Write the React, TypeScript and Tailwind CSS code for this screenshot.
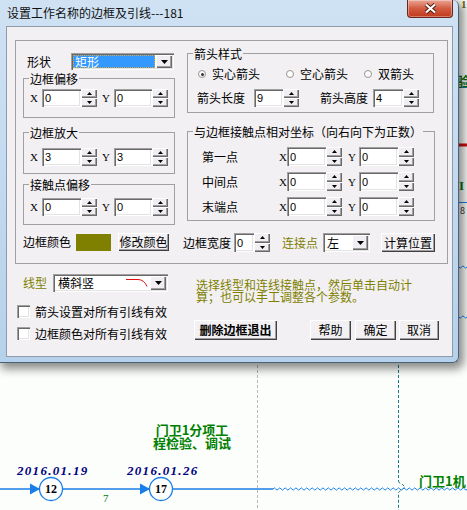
import React from "react";

const cjk = "font-['Noto_Sans_CJK_SC',sans-serif]";
const sans = "font-['Liberation_Sans',sans-serif]";
const serif = "font-['Liberation_Serif',serif]";

const sunken =
  "bg-white shadow-[inset_1px_1px_0_#a0a0a0,inset_2px_2px_0_#696969,inset_-1px_-1px_0_#ffffff,inset_-2px_-2px_0_#e3e3e3]";
const raised =
  "bg-[#f0eef2] shadow-[inset_1px_1px_0_#ffffff,inset_-1px_-1px_0_#696969,inset_-2px_-2px_0_#a0a0a0]";
const btnFace =
  "bg-[#f2f0f3] shadow-[inset_1px_1px_0_#ffffff,inset_-1px_-1px_0_#404040,inset_-2px_-2px_0_#a0a0a0] flex items-center justify-center";

function Tri({ up }: { up?: boolean }) {
  return (
    <svg width="5" height="3" viewBox="0 0 5 3">
      <path d={up ? "M2.5 0L5 3H0Z" : "M0 0H5L2.5 3Z"} fill="#000" />
    </svg>
  );
}

function Spin() {
  return (
    <div className="w-[16px] h-full flex flex-col shrink-0">
      <div className={`flex-1 flex items-center justify-center ${raised}`}>
        <Tri up />
      </div>
      <div className={`flex-1 flex items-center justify-center ${raised}`}>
        <Tri />
      </div>
    </div>
  );
}

function Edit({ v, w }: { v: string; w: string }) {
  return (
    <div className={`${w} h-full shrink-0 ${sunken} pl-[3px] flex items-center ${sans} text-[11px]`}>
      {v}
    </div>
  );
}

function Combo({ w, children }: { w: string; children: React.ReactNode }) {
  return (
    <div className={`${w} h-full shrink-0 ${sunken} p-[2px] flex`}>
      <div className="flex-1 flex items-center min-w-0">{children}</div>
      <div className={`w-[16px] h-full shrink-0 flex items-center justify-center ${raised}`}>
        <svg width="7" height="4" viewBox="0 0 7 4">
          <path d="M0 0H7L3.5 4Z" fill="#000" />
        </svg>
      </div>
    </div>
  );
}

function Btn({ w, bold, children }: { w: string; bold?: boolean; children: React.ReactNode }) {
  return <div className={`${w} h-full shrink-0 ${btnFace} ${bold ? "font-bold" : ""}`}>{children}</div>;
}

function Group({ label, cls, children }: { label: string; cls: string; children: React.ReactNode }) {
  return (
    <fieldset className={`${cls} shrink-0 border border-[#a0a0a0]`}>
      <legend className="ml-[5px] px-[1px] leading-[12px] relative top-[1px]">{label}</legend>
      {children}
    </fieldset>
  );
}

function LeftXY({ v, mt }: { v: string; mt: string }) {
  return (
    <div className={`${mt} h-[18px] flex items-center pl-[6px]`}>
      <span className={`w-[12px] ${serif} text-[11px]`}>X</span>
      <Edit v={v} w="w-[39px]" />
      <Spin />
      <span className={`w-[17px] pl-[5px] ${serif} text-[11px]`}>Y</span>
      <Edit v={v} w="w-[38px]" />
      <Spin />
    </div>
  );
}

function PtRow({ label, mt }: { label: string; mt: string }) {
  return (
    <div className={`${mt} h-[19px] flex items-center pl-[14px]`}>
      <span className="w-[77px]">{label}</span>
      <span className={`w-[8px] ${serif} text-[11px]`}>X</span>
      <Edit v="0" w="w-[39px]" />
      <Spin />
      <span className={`w-[17px] pl-[6px] ${serif} text-[11px]`}>Y</span>
      <Edit v="0" w="w-[39px]" />
      <Spin />
    </div>
  );
}

function Radio({ label, w, checked }: { label: string; w: string; checked?: boolean }) {
  return (
    <div className={`${w} flex items-center`}>
      <span className="w-[8px] h-[8px] rounded-full border border-[#9a9290] bg-white flex items-center justify-center">
        {checked && <span className="w-[3px] h-[3px] rounded-full bg-[#333]" />}
      </span>
      <span className="ml-[6px]">{label}</span>
    </div>
  );
}

function Check({ label, mt }: { label: string; mt: string }) {
  return (
    <div className={`${mt} h-[13px] flex items-center`}>
      <span className={`w-[13px] h-[13px] ${sunken}`} />
      <span className="ml-[5px] whitespace-nowrap">{label}</span>
    </div>
  );
}

function wave(x0: number, x1: number, y: number, p = 5.4, a = 1.1) {
  let d = `M${x0} ${y}`;
  for (let x = x0; x < x1; x += p) d += ` q${p / 4} ${-2 * a} ${p / 2} 0 t${p / 2} 0`;
  return d;
}

function Diagram() {
  const blue = "#1a7ee8";
  const teal = "#1c7a86";
  return (
    <>
      <svg className="absolute inset-0" width="467" height="510" viewBox="0 0 467 510">
        {/* strip right of the dialog */}
        <line x1="440" y1="87.5" x2="467" y2="87.5" stroke={blue} />
        <line x1="440" y1="145" x2="467" y2="145" stroke="#cc1111" strokeWidth="3" />
        <line x1="440" y1="202.5" x2="467" y2="202.5" stroke={blue} />
        <path d={wave(440, 467, 267)} stroke={blue} fill="none" />
        <path d={wave(440, 467, 317)} stroke={blue} fill="none" />

        {/* lower part of the network chart */}
        <line x1="257.5" y1="360" x2="257.5" y2="510" stroke="#b8b8b8" strokeDasharray="3 2" />
        <path d="M398.5 360V481" stroke={teal} strokeDasharray="3 2" fill="none" />
        <path d="M398.5 481q0 2 3 2.5l3.5 3.5-3.5 3.5q-3 0.5-3 3V510" stroke={teal} strokeDasharray="3 2" fill="none" />
        <line x1="0" y1="489" x2="273" y2="489" stroke={blue} strokeWidth="1.5" />
        <path d={wave(273, 470, 489)} stroke={blue} fill="none" />

        <path d="M30 483.5L40 489L30 494.5Z" fill={blue} />
        <circle cx="51" cy="489" r="11.5" fill="white" stroke={blue} strokeWidth="1.3" />
        <text x="51" y="493" textAnchor="middle" fontSize="12" fontWeight="bold" fontFamily="Liberation Serif" fill="#000">12</text>
        <path d="M140 483.5L150 489L140 494.5Z" fill={blue} />
        <circle cx="161" cy="489" r="11.5" fill="white" stroke={blue} strokeWidth="1.3" />
        <text x="161" y="493" textAnchor="middle" fontSize="12" fontWeight="bold" fontFamily="Liberation Serif" fill="#000">17</text>

        <text x="17" y="475" fontSize="13" fontWeight="bold" fontStyle="italic" fontFamily="Liberation Serif" letterSpacing="1.3" fill="#000080">2016.01.19</text>
        <text x="127" y="475" fontSize="13" fontWeight="bold" fontStyle="italic" fontFamily="Liberation Serif" letterSpacing="1.3" fill="#000080">2016.01.26</text>
        <text x="103" y="502" fontSize="11" fontFamily="Liberation Serif" fill="#008000">7</text>
      </svg>

      {/* labels placed on the chart canvas */}
      <div className="absolute left-[461px] top-0 text-[11px] leading-[9px] font-bold text-[#6b6b00] font-['Liberation_Serif',serif]">1</div>
      <div className="absolute left-[457px] top-[74px] text-[13px] leading-[13px] font-bold text-[#0a6a0a]">验</div>
      <div className="absolute left-[459px] top-[179px] text-[13px] leading-[13px] font-bold text-[#0a7a0a] font-['Liberation_Serif',serif]">I</div>
      <div className="absolute left-[460px] top-[206px] text-[9px] leading-[9px] text-[#333]">8</div>
      <div className="absolute left-[142px] top-[424px] w-[100px] text-center text-[13px] leading-[12.5px] font-bold text-[#008000] whitespace-nowrap">
        <div>门卫1分项工</div>
        <div>程检验、调试</div>
      </div>
      <div className="absolute left-[419px] top-[474px] text-[13px] leading-[13px] font-bold text-[#008000] whitespace-nowrap">
        门卫1机
      </div>
    </>
  );
}

function Dialog() {
  return (
    <div className="absolute left-0 top-0 w-[459px] h-[363px] flex flex-col border-r border-b border-[#4d6079] rounded-tr-[6px] rounded-br-[6px] bg-gradient-to-b from-[#cfe2f4] via-[#c2daf0] to-[#b6d1eb] shadow-[3px_4px_10px_2px_rgba(0,0,0,0.45)]">
      {/* title bar */}
      <div className="h-[26px] flex shrink-0">
        <div className="ml-[7px] mt-[5px] leading-[16px] text-[12px] text-[#111] whitespace-nowrap">
          设置工作名称的边框及引线---181
        </div>
        <div className="ml-auto mr-[5px] w-[46px] h-[18px] rounded-b-[4px] border border-t-0 border-[#6b2417] bg-gradient-to-b from-[#e8a494] via-[#d25a40] to-[#c0381c] flex items-center justify-center shadow-[inset_0_0_0_1px_rgba(255,255,255,0.35)]">
          <svg width="13" height="11" viewBox="0 0 13 11">
            <path d="M2 1.5L11 9.5M11 1.5L2 9.5" stroke="#4a1208" strokeWidth="3.8" />
            <path d="M2 1.5L11 9.5M11 1.5L2 9.5" stroke="#ffffff" strokeWidth="2.2" />
          </svg>
        </div>
      </div>

      {/* client area */}
      <div className="ml-[6px] w-[447px] h-[331px] shrink-0 border border-[#8e9bab] bg-[#f2f0f3] flex flex-col">
        <div className="ml-[8px] mt-[13px] w-[433px] h-[224px] shrink-0 border border-[#a0a0a0] flex items-start">
          {/* left column */}
          <div className="ml-[7px] w-[152px] flex flex-col">
            <div className="mt-[12px] h-[17px] flex items-center">
              <span className="w-[48px] pl-[4px]">形状</span>
              <Combo w="w-[103px]">
                <div className="flex-1 h-full mr-[1px] bg-[#3399ff] border border-dotted border-[#d9a441] text-white flex items-center pl-[1px]">
                  矩形
                </div>
              </Combo>
            </div>
            <Group label="边框偏移" cls="mt-[2px] w-[152px] h-[46px]">
              <LeftXY v="0" mt="mt-[5px]" />
            </Group>
            <Group label="边框放大" cls="mt-[8px] w-[152px] h-[48px]">
              <LeftXY v="3" mt="mt-[10px]" />
            </Group>
            <Group label="接触点偏移" cls="mt-[4px] w-[152px] h-[47px]">
              <LeftXY v="0" mt="mt-[8px]" />
            </Group>
            <div className="mt-[8px] h-[18px] flex items-center">
              <span className="w-[53px]">边框颜色</span>
              <span className="w-[35px] h-[17px] bg-[#808000]" />
              <div className="ml-[7px] h-[18px] flex">
                <Btn w="w-[51px]">修改颜色</Btn>
              </div>
            </div>
          </div>

          {/* right column */}
          <div className="ml-[8px] w-[253px] flex flex-col">
            <Group label="箭头样式" cls="ml-[4px] mt-[6px] w-[247px] h-[66px]">
              <div className="mt-[9px] h-[12px] flex items-center pl-[10px]">
                <Radio checked label="实心箭头" w="w-[88px]" />
                <Radio label="空心箭头" w="w-[78px]" />
                <Radio label="双箭头" w="w-[60px]" />
              </div>
              <div className="mt-[9px] h-[18px] flex items-center pl-[9px]">
                <span className="w-[57px]">箭头长度</span>
                <Edit v="9" w="w-[29px]" />
                <Spin />
                <span className="ml-[21px] w-[53px]">箭头高度</span>
                <Edit v="4" w="w-[30px]" />
                <Spin />
              </div>
            </Group>
            <Group label="与边框接触点相对坐标（向右向下为正数）" cls="ml-[4px] mt-[12px] w-[248px] h-[96px]">
              <PtRow label="第一点" mt="mt-[10px]" />
              <PtRow label="中间点" mt="mt-[6px]" />
              <PtRow label="末端点" mt="mt-[6px]" />
            </Group>
            <div className="mt-[12px] h-[19px] flex items-center">
              <span className="w-[51px]">边框宽度</span>
              <Edit v="0" w="w-[20px]" />
              <Spin />
              <span className="ml-[12px] w-[41px] text-[#808000]">连接点</span>
              <Combo w="w-[47px]">
                <span className="pl-[2px]">左</span>
              </Combo>
              <div className="ml-[11px] h-full flex">
                <Btn w="w-[54px]">计算位置</Btn>
              </div>
            </div>
          </div>
        </div>

        {/* below the panel */}
        <div className="flex">
          <div className="ml-[10px] w-[170px] flex flex-col">
            <div className="mt-[10px] h-[18px] flex items-center">
              <span className="w-[36px] pl-[6px] text-[#808000]">线型</span>
              <Combo w="w-[115px]">
                <span className="pl-[3px] w-[71px] shrink-0">横斜竖</span>
                <svg width="22" height="10" viewBox="0 0 22 10">
                  <path d="M0 1.5H12Q18 1.5 21 8.5" stroke="#e01010" fill="none" />
                </svg>
              </Combo>
            </div>
            <Check label="箭头设置对所有引线有效" mt="mt-[13px]" />
            <Check label="边框颜色对所有引线有效" mt="mt-[9px]" />
          </div>
          <div className="ml-[7px] flex flex-col">
            <div className="mt-[15px] pl-[2px] text-[#808000] leading-[12px] whitespace-nowrap">
              <div className="h-[12px]">选择线型和连线接触点，然后单击自动计</div>
              <div className="h-[12px]">算；也可以手工调整各个参数。</div>
            </div>
            <div className="mt-[17px] h-[20px] flex">
              <Btn w="w-[83px]" bold>
                删除边框退出
              </Btn>
              <div className="ml-[33px] h-full flex">
                <Btn w="w-[41px]">帮助</Btn>
              </div>
              <div className="ml-[4px] h-full flex">
                <Btn w="w-[41px]">确定</Btn>
              </div>
              <div className="ml-[3px] h-full flex">
                <Btn w="w-[40px]">取消</Btn>
              </div>
            </div>
          </div>
        </div>
      </div>
    </div>
  );
}

export default function App() {
  return (
    <div className={`relative w-[467px] h-[510px] overflow-hidden bg-[#fbfefb] ${cjk} text-[12px] leading-[12px] text-black`}>
      <Diagram />
      <Dialog />
    </div>
  );
}
